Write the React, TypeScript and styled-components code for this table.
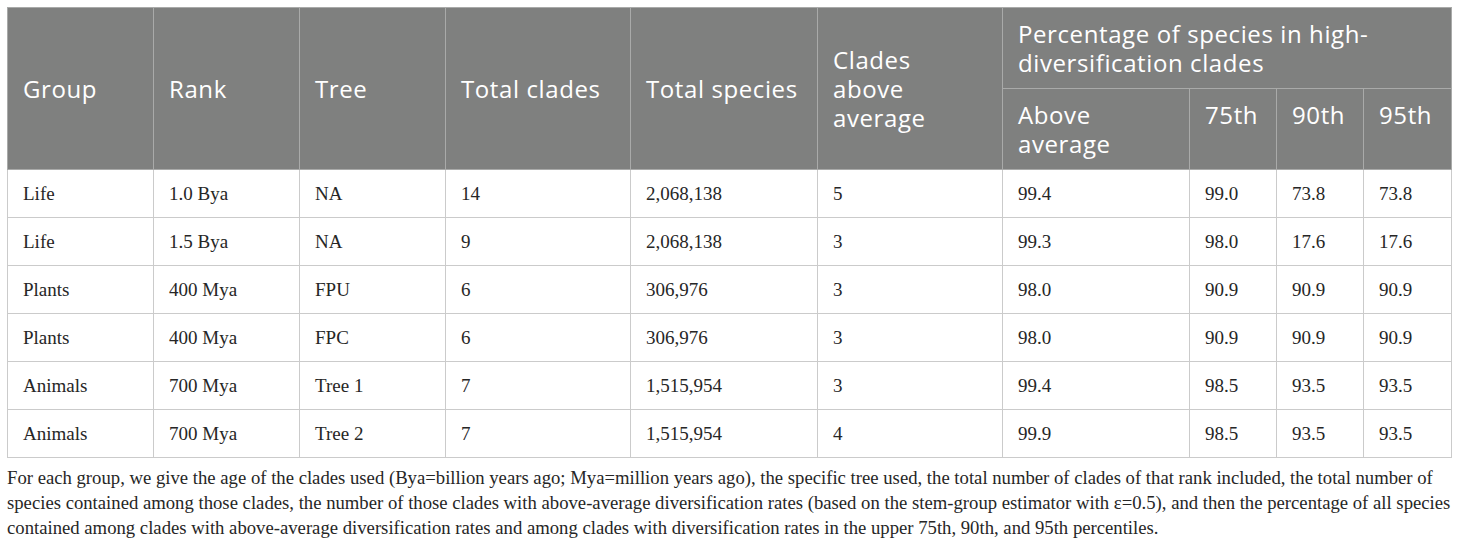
import {FC} from 'react';
import {createGlobalStyle, styled} from 'styled-components';

interface DataRow {
  group: string;
  rank: string;
  tree: string;
  clades: string;
  species: string;
  above: string;
  pctAbove: string;
  p75: string;
  p90: string;
  p95: string;
}

const ROWS: DataRow[] = [
  {group: 'Life', rank: '1.0 Bya', tree: 'NA', clades: '14', species: '2,068,138', above: '5', pctAbove: '99.4', p75: '99.0', p90: '73.8', p95: '73.8'},
  {group: 'Life', rank: '1.5 Bya', tree: 'NA', clades: '9', species: '2,068,138', above: '3', pctAbove: '99.3', p75: '98.0', p90: '17.6', p95: '17.6'},
  {group: 'Plants', rank: '400 Mya', tree: 'FPU', clades: '6', species: '306,976', above: '3', pctAbove: '98.0', p75: '90.9', p90: '90.9', p95: '90.9'},
  {group: 'Plants', rank: '400 Mya', tree: 'FPC', clades: '6', species: '306,976', above: '3', pctAbove: '98.0', p75: '90.9', p90: '90.9', p95: '90.9'},
  {group: 'Animals', rank: '700 Mya', tree: 'Tree 1', clades: '7', species: '1,515,954', above: '3', pctAbove: '99.4', p75: '98.5', p90: '93.5', p95: '93.5'},
  {group: 'Animals', rank: '700 Mya', tree: 'Tree 2', clades: '7', species: '1,515,954', above: '4', pctAbove: '99.9', p75: '98.5', p90: '93.5', p95: '93.5'},
];

const COL_WIDTHS = [146, 146, 146, 185, 187, 185, 187, 87, 87, 88];

const FIELDS: (keyof DataRow)[] = [
  'group',
  'rank',
  'tree',
  'clades',
  'species',
  'above',
  'pctAbove',
  'p75',
  'p90',
  'p95',
];

export const App: FC = () => {
  return (
    <Page>
      <GlobalStyle />
      <Table>
        <colgroup>
          {COL_WIDTHS.map((w, i) => (
            // eslint-disable-next-line react/no-array-index-key
            <col key={i} style={{width: w}} />
          ))}
        </colgroup>
        <thead>
          <tr>
            <HeadCell rowSpan={2}>Group</HeadCell>
            <HeadCell rowSpan={2}>Rank</HeadCell>
            <HeadCell rowSpan={2}>Tree</HeadCell>
            <HeadCell rowSpan={2}>Total clades</HeadCell>
            <HeadCell rowSpan={2}>Total species</HeadCell>
            <HeadCell rowSpan={2}>
              Clades
              <br />
              above
              <br />
              average
            </HeadCell>
            <HeadCell colSpan={4}>
              Percentage of species in high-
              <br />
              diversification clades
            </HeadCell>
          </tr>
          <tr>
            <SubHeadCell>
              Above
              <br />
              average
            </SubHeadCell>
            <SubHeadCell>75th</SubHeadCell>
            <SubHeadCell>90th</SubHeadCell>
            <SubHeadCell>95th</SubHeadCell>
          </tr>
        </thead>
        <tbody>
          {ROWS.map((row, i) => (
            // eslint-disable-next-line react/no-array-index-key
            <tr key={i}>
              {FIELDS.map(f => (
                <Cell key={f}>{row[f]}</Cell>
              ))}
            </tr>
          ))}
        </tbody>
      </Table>
      <Caption>
        For each group, we give the age of the clades used (Bya=billion years ago; Mya=million years
        ago), the specific tree used, the total number of clades of that rank included, the total
        number of species contained among those clades, the number of those clades with
        above-average diversification rates (based on the stem-group estimator with ε=0.5), and then
        the percentage of all species contained among clades with above-average diversification
        rates and among clades with diversification rates in the upper 75th, 90th, and 95th
        percentiles.
      </Caption>
    </Page>
  );
};

App.displayName = 'App';

export default App;

const GlobalStyle = createGlobalStyle`
  html, body {
    margin: 0;
    padding: 0;
    background: #ffffff;
  }
`;

const Page = styled.div`
  padding: 7px;
  width: 1444px;
`;

const Table = styled.table`
  width: 1444px;
  table-layout: fixed;
  border-collapse: collapse;
  border: 1px solid #c8c8c8;
`;

const HeadCell = styled.th`
  background: #7f807f;
  color: #ffffff;
  font-family: 'Open Sans', 'Noto Sans', sans-serif;
  font-weight: 400;
  font-size: 24px;
  line-height: 29px;
  letter-spacing: 0.6px;
  text-align: left;
  vertical-align: middle;
  white-space: nowrap;
  padding: 11px 15px;
  border: 1px solid #a9aaa9;
`;

const SubHeadCell = styled(HeadCell)`
  vertical-align: top;
`;

const Cell = styled.td`
  font-family: 'Liberation Serif', 'Times New Roman', serif;
  font-size: 19px;
  line-height: 24px;
  color: #262626;
  text-align: left;
  vertical-align: middle;
  white-space: nowrap;
  padding: 12px 15px 11px;
  border: 1px solid #cbcbcb;
`;

const Caption = styled.p`
  margin: 7px 0 0;
  font-family: 'Liberation Serif', 'Times New Roman', serif;
  font-size: 18.7px;
  line-height: 25px;
  color: #262626;
`;
